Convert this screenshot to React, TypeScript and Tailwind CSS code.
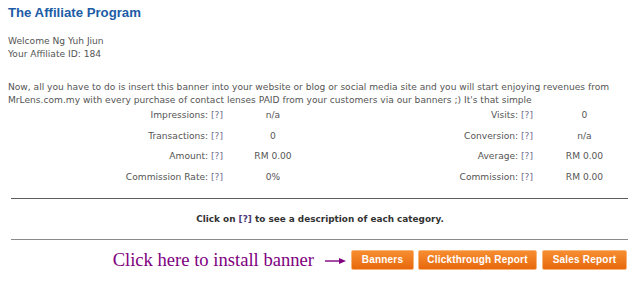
const stats = [
  ["Impressions", "n/a", "Visits", "0"],
  ["Transactions", "0", "Conversion", "n/a"],
  ["Amount", "RM 0.00", "Average", "RM 0.00"],
  ["Commission Rate", "0%", "Commission", "RM 0.00"],
]

function Help() {
  return <span className="text-[#6e6e8e]"> [?]</span>
}

function OrangeButton({ label, width }: { label: string; width: string }) {
  return (
    <button
      className={`${width} h-[20px] whitespace-nowrap rounded-[2px] border border-[#f7b57c] bg-gradient-to-b from-[#f68d2e] to-[#e8680a] font-['Liberation_Sans',Arial,sans-serif] text-[10px] font-bold tracking-[0.2px] text-white`}
    >
      {label}
    </button>
  )
}

export default function App() {
  return (
    <div className="w-[640px] h-[292px] bg-white px-2 pt-[5px] font-['DejaVu_Sans',Tahoma,sans-serif] text-[9.1px] text-[#555]">
      <h1 className="font-['Liberation_Sans',Arial,sans-serif] text-[13.2px] font-bold text-[#1d5ca6] leading-[16px]">
        The Affiliate Program
      </h1>

      <div className="mt-[14px] leading-[13px]">
        <p>Welcome Ng Yuh Jiun</p>
        <p>Your Affiliate ID: 184</p>
      </div>

      <p className="mt-[20px] leading-[13px]">
        Now, all you have to do is insert this banner into your website or blog or social media site and you will start enjoying revenues from MrLens.com.my with every purchase of contact lenses PAID from your customers via our banners ;) It's that simple
      </p>

      <table className="-mt-[1px] w-[624px]">
        <tbody>
          {stats.map((r) => (
            <tr key={r[0]} className="h-[20.4px]">
              <td className="w-[215px] text-right">
                {r[0]}:<Help />
              </td>
              <td className="w-[100px] text-center">{r[1]}</td>
              <td className="w-[210px] text-right">
                {r[2]}:<Help />
              </td>
              <td className="pl-[4px] text-center">{r[3]}</td>
            </tr>
          ))}
        </tbody>
      </table>

      <div className="mt-[10px] ml-[3px] mr-[4px] border-t border-[#5c5c5c]" />
      <p className="pt-[14px] pb-[13px] text-center text-[8.9px] font-bold text-[#333] leading-[13px]">
        Click on <span className="text-[#4b3a7c]">[?]</span> to see a description of each category.
      </p>
      <div className="ml-[3px] mr-[4px] border-t border-[#8a8a8a]" />

      <div className="mt-[10px] flex items-center justify-end pr-[5px]">
        <span className="flex items-center font-['Liberation_Serif',serif] text-[18.6px] leading-[20px] text-[#800080]">
          Click here to install banner
          <svg width="22" height="8" viewBox="0 0 22 8" className="ml-[11px] mr-[4px] mt-[2px]">
            <path d="M0 4 H17" stroke="#800080" strokeWidth="1.4" />
            <path d="M14 1 L21 4 L14 7 Z" fill="#800080" />
          </svg>
        </span>
        <OrangeButton label="Banners" width="w-[63px]" />
        <span className="w-[4px]" />
        <OrangeButton label="Clickthrough Report" width="w-[119px]" />
        <span className="w-[5px]" />
        <OrangeButton label="Sales Report" width="w-[85px]" />
      </div>
    </div>
  )
}
